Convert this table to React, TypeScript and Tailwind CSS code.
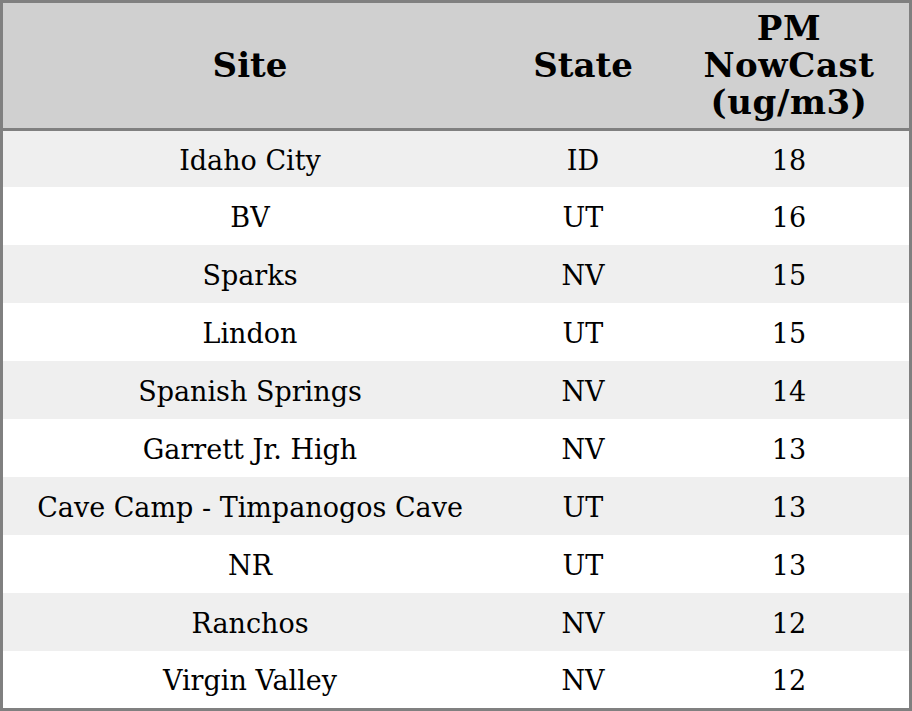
const rows: [string, string, number][] = [
  ['Idaho City', 'ID', 18],
  ['BV', 'UT', 16],
  ['Sparks', 'NV', 15],
  ['Lindon', 'UT', 15],
  ['Spanish Springs', 'NV', 14],
  ['Garrett Jr. High', 'NV', 13],
  ['Cave Camp - Timpanogos Cave', 'UT', 13],
  ['NR', 'UT', 13],
  ['Ranchos', 'NV', 12],
  ['Virgin Valley', 'NV', 12],
]

export default function App() {
  return (
    <div className="h-[711px] w-[912px] border-[3px] border-[#808080] bg-white font-['DejaVu_Serif',serif] text-black">
      <div className="grid h-[128px] grid-cols-[494px_172px_1fr] items-center border-b-[3px] border-[#808080] bg-[#d0d0d0] text-center text-[34px] font-bold leading-[37px]">
        <div>Site</div>
        <div>State</div>
        <div className="tracking-[0.6px]">
          PM
          <br />
          NowCast
          <br />
          (ug/m3)
        </div>
      </div>
      {rows.map(([site, state, pm], i) => (
        <div
          key={site}
          className={`grid grid-cols-[494px_172px_1fr] items-center pt-[4px] text-center text-[27px] ${
            i % 2 === 0 ? 'bg-[#efefef]' : 'bg-white'
          } ${i === 0 ? 'h-[56px]' : i === rows.length - 1 ? 'h-[57px]' : 'h-[58px]'}`}
        >
          <div>{site}</div>
          <div>{state}</div>
          <div>{pm}</div>
        </div>
      ))}
    </div>
  )
}
